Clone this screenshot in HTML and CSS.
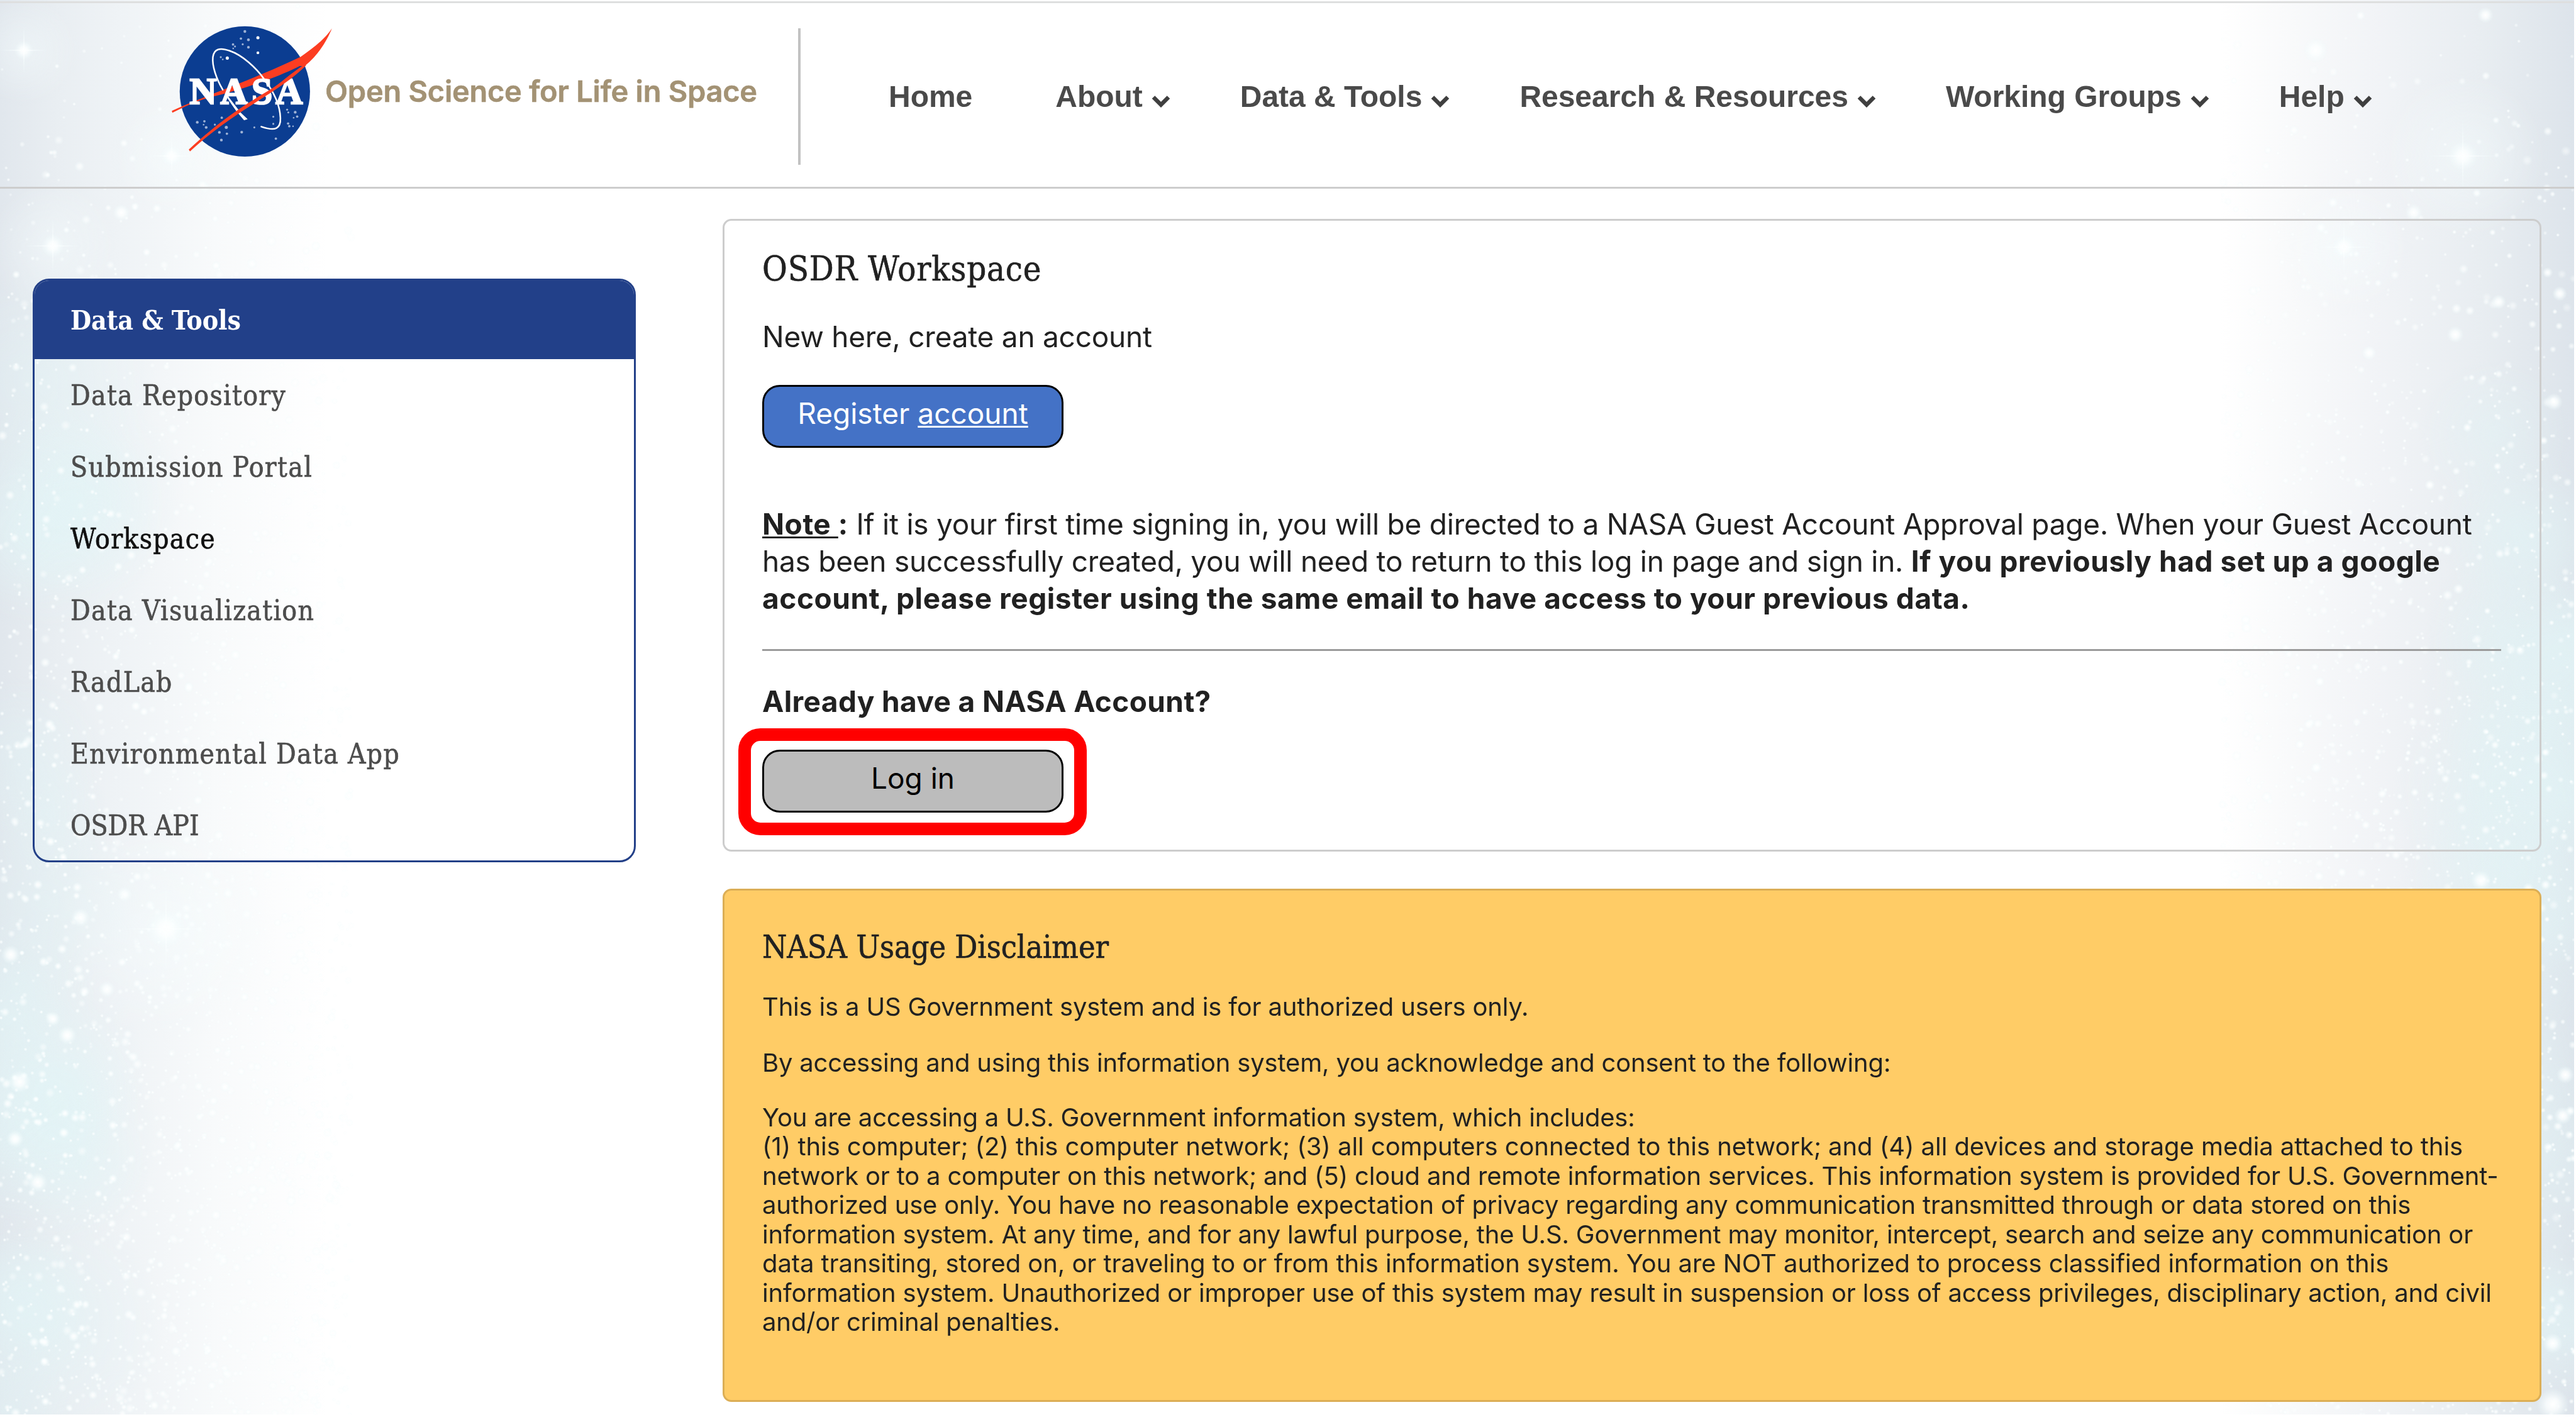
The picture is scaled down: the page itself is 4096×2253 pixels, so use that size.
FILE: index.html
```html
<!DOCTYPE html>
<html lang="en">
<head>
<meta charset="utf-8">
<title>OSDR Workspace</title>
<link rel="stylesheet" href="styles.css">
</head>
<body>
<canvas class="sky" id="sky" width="4093" height="2249"></canvas>
<header class="header">
  <a class="brand">
    <svg class="logo" viewBox="85 125 825 680">
      <circle cx="462" cy="464" r="330" fill="#0b3d91"/>
      <g fill="#9fb3d6">
        <circle cx="462" cy="160" r="7"/><circle cx="442" cy="196" r="6"/><circle cx="480" cy="202" r="7"/><circle cx="528" cy="192" r="8" fill="#fff"/><circle cx="451" cy="225" r="5"/><circle cx="480" cy="240" r="7"/><circle cx="528" cy="268" r="7" fill="#fff"/><circle cx="402" cy="226" r="6"/><circle cx="412" cy="236" r="5"/><circle cx="403" cy="246" r="4"/><circle cx="340" cy="290" r="5"/><circle cx="350" cy="302" r="4"/><circle cx="373" cy="295" r="8" fill="#fff"/>
        <circle cx="221" cy="620" r="7"/><circle cx="257" cy="615" r="6"/><circle cx="253" cy="632" r="4"/><circle cx="266" cy="646" r="7"/><circle cx="345" cy="597" r="6"/><circle cx="310" cy="632" r="5"/><circle cx="368" cy="646" r="8"/><circle cx="333" cy="671" r="7"/><circle cx="371" cy="678" r="6"/><circle cx="343" cy="710" r="7"/><circle cx="446" cy="670" r="7"/><circle cx="510" cy="646" r="5"/><circle cx="619" cy="703" r="6"/>
        <circle cx="676" cy="556" r="5"/><circle cx="682" cy="570" r="5"/><circle cx="717" cy="569" r="7"/><circle cx="727" cy="591" r="6"/><circle cx="709" cy="597" r="4"/><circle cx="681" cy="626" r="6"/><circle cx="687" cy="640" r="6"/><circle cx="706" cy="640" r="4"/><circle cx="606" cy="592" r="5"/><circle cx="606" cy="628" r="5"/>
      </g>
      <path fill="#fc3d21" d="M92 562C250 490 500 405 745 288C800 250 862 205 903 145C880 200 840 275 765 335L740 335C650 380 500 440 300 490C220 510 150 545 95 572Z"/>
      <g fill="none" stroke="#fff" stroke-linecap="round">
        <path stroke-width="8" d="M350 455C318 400 295 335 300 290C306 248 335 240 385 258C450 280 520 345 560 402C612 470 640 540 642 598C644 650 620 668 545 642"/>
        <path stroke-width="7" d="M376 490C390 520 410 545 430 568"/>
      </g>
      <path fill="#fff" d="M372 495L420 565L458 610L476 604L440 570L384 498Z"/>
      <text class="logo-text" x="182 338 496 618" y="525">NASA</text>
      <path fill="#fc3d21" d="M768 325C690 375 640 425 590 455C430 550 330 620 178 758L184 768C330 635 440 570 600 466C660 425 720 385 772 332Z"/>
    </svg>
    <span class="brand-name">Open Science for Life in Space</span>
  </a>
  <nav class="nav">
    <a class="nav-item nav-home">Home</a>
    <a class="nav-item">About <svg class="chevron" viewBox="0 0 30 20"><path d="M3 3.5L15 15.5L27 3.5"/></svg></a>
    <a class="nav-item">Data &amp; Tools <svg class="chevron" viewBox="0 0 30 20"><path d="M3 3.5L15 15.5L27 3.5"/></svg></a>
    <a class="nav-item">Research &amp; Resources <svg class="chevron" viewBox="0 0 30 20"><path d="M3 3.5L15 15.5L27 3.5"/></svg></a>
    <a class="nav-item">Working Groups <svg class="chevron" viewBox="0 0 30 20"><path d="M3 3.5L15 15.5L27 3.5"/></svg></a>
    <a class="nav-item">Help <svg class="chevron" viewBox="0 0 30 20"><path d="M3 3.5L15 15.5L27 3.5"/></svg></a>
  </nav>
</header>
<main class="main">
  <aside class="sidebar">
    <h2 class="sidebar-title">Data &amp; Tools</h2>
    <a class="side-link">Data Repository</a>
    <a class="side-link">Submission Portal</a>
    <a class="side-link active">Workspace</a>
    <a class="side-link">Data Visualization</a>
    <a class="side-link">RadLab</a>
    <a class="side-link">Environmental Data App</a>
    <a class="side-link tight">OSDR API</a>
  </aside>
  <div class="content">
    <section class="panel">
      <h1 class="title">OSDR Workspace</h1>
      <p class="intro">New here, create an account</p>
      <a class="button register">Register <u>account</u></a>
      <p class="note"><b><u>Note </u>:</b> If it is your first time signing in, you will be directed to a NASA Guest Account Approval page. When your Guest Account<br>has been successfully created, you will need to return to this log in page and sign in. <b>If you previously had set up a google<br>account, please register using the same email to have access to your previous data.</b></p>
      <div class="rule"></div>
      <p class="already">Already have a NASA Account?</p>
      <a class="button login">Log in<i class="highlight"></i></a>
    </section>
    <section class="disclaimer">
      <h2 class="title">NASA Usage Disclaimer</h2>
      <p>This is a US Government system and is for authorized users only.</p>
      <p>By accessing and using this information system, you acknowledge and consent to the following:</p>
      <p>You are accessing a U.S. Government information system, which includes:<br>
      <span class="numbered">(1) this computer; (2) this computer network; (3) all computers connected to this network; and (4) all devices and storage media attached to this</span><br>
      network or to a computer on this network; and (5) cloud and remote information services. This information system is provided for U.S. Government-<br>
      authorized use only. You have no reasonable expectation of privacy regarding any communication transmitted through or data stored on this<br>
      information system. At any time, and for any lawful purpose, the U.S. Government may monitor, intercept, search and seize any communication or<br>
      <span class="numbered">data transiting, stored on, or traveling to or from this information system. You are NOT authorized to process classified information on this</span><br>
      information system. Unauthorized or improper use of this system may result in suspension or loss of access privileges, disciplinary action, and civil<br>
      and/or criminal penalties.</p>
    </section>
  </div>
</main>
<script src="sky.js"></script>
</body>
</html>
```
FILE: styles.css
```css
* { box-sizing: border-box; margin: 0; padding: 0; }
html { background: #fff; }
body {
  position: relative; width: 4096px; height: 2253px; overflow: hidden;
  font-family: Inter, "Liberation Sans", sans-serif; color: #212121;
}

.sky {
  position: absolute; left: 0; top: 0; z-index: -1;
  background:
    linear-gradient(90deg, #e1e7ed 0, #e9eef2 90px, #eff3f6 190px, #f8fafb 340px, #fff 520px, #fff 3530px, #f9fafb 3640px, #f2f4f7 3770px, #e8edf1 3950px, #dde4eb 4093px);
}

.header {
  display: flex; align-items: flex-start;
  width: 4093px; height: 298px; margin-top: 2px;
  border-top: 3px solid #dedfdf; border-bottom: 3px solid #cdcdcd;
}
.brand {
  display: flex; align-items: flex-start;
  width: 1273px; height: 217px; margin-top: 40px; padding-left: 271px;
  border-right: 4px solid #c2c2c2;
}
.logo { width: 259px; height: 213.5px; margin-top: -6px; flex: none; }
.logo-text { font: bold 190px "Liberation Serif", serif; fill: #fff; stroke: #fff; stroke-width: 8px; }
.brand-name {
  margin: 70px 0 0 -13px; font-size: 47px; line-height: 60px; font-weight: 600;
  letter-spacing: -0.27px; color: #a39274; white-space: nowrap;
  -webkit-text-stroke: 0.6px;
}
.nav {
  display: flex; gap: 111px; margin: 119px 0 0 140px; letter-spacing: -0.02px;
  font: bold 48px/60px "Liberation Sans", Arial, sans-serif; color: #4a4a4a;
}
.nav-item { display: flex; align-items: flex-start; white-space: nowrap; }
.nav-home { padding-right: 21px; }
.chevron { width: 30px; height: 20px; margin: 27px 0 0 14px; }
.chevron path { fill: none; stroke: #3f3f3f; stroke-width: 6.5; }

.main { display: flex; align-items: flex-start; gap: 138px; padding: 48px 0 0 52px; }
.sidebar {
  width: 959px; height: 928px; margin-top: 95px;
  border: 3px solid #234088; border-radius: 26px; overflow: hidden;
  font-family: "DejaVu Serif Condensed", "DejaVu Serif", serif; font-size: 44px;
  font-stretch: condensed; letter-spacing: 1.3px;
}
.sidebar-title {
  height: 125px; padding-left: 57px; background: #224089; color: #fff;
  font-size: 42.5px; line-height: 126px; font-weight: bold; letter-spacing: -0.1px;
}
.side-link {
  display: block; height: 114px; padding: 1px 0 0 57px; line-height: 114px;
  color: #4d4d4d; -webkit-text-stroke: 0.6px;
}
.active { color: #111; }
.tight { letter-spacing: 0; }

.content { width: 2892px; }
.panel {
  height: 1006px; padding: 42px 61px 0 60px;
  border: 3px solid #cdcdcd; border-radius: 14px;
}
.title {
  font: normal 54px/70px "DejaVu Serif Condensed", "DejaVu Serif", serif;
  font-stretch: condensed; letter-spacing: 0.8px; white-space: nowrap;
  -webkit-text-stroke: 0.6px;
}
.intro { margin-top: 42px; font-size: 46px; line-height: 60px; letter-spacing: -0.25px; }
.button {
  position: relative; display: block; width: 479px; height: 100px; padding-top: 12px;
  border: 3px solid #000; border-radius: 28px; text-align: center;
  font-size: 46px; line-height: 60px;
}
u { text-underline-offset: 3px; text-decoration-thickness: 3px; text-decoration-skip-ink: none; }
.register { margin-top: 47px; background: #4472c6; color: #fff; }
.note { margin-top: 92px; font-size: 46px; line-height: 59.2px; white-space: nowrap; letter-spacing: -0.24px; }
.rule { height: 3px; margin-top: 50px; background: #9b9b9b; }
.already { margin-top: 50px; font-size: 46px; line-height: 60px; font-weight: 700; letter-spacing: 0.38px; }
b { font-weight: 700; letter-spacing: 0.56px; }
.login { margin-top: 47px; background: #bcbcbc; color: #000; }
.highlight {
  position: absolute; left: -41px; top: -37px; width: 554px; height: 170px;
  border: 20px solid #f00; border-radius: 35px;
}
.disclaimer {
  height: 816px; margin-top: 59px; padding: 55px 0 0 60px;
  background: #ffcc66; border: 3px solid #dcae55; border-radius: 14px;
}
.disclaimer .title { font-size: 50px; letter-spacing: -0.05px; }
.disclaimer p { font-size: 40px; line-height: 46.45px; white-space: nowrap; margin-top: 40px; letter-spacing: -0.19px; }
.disclaimer .title + p { margin: 37px 0 43px; }
.disclaimer .numbered { letter-spacing: -0.07px; }
```
FILE: sky.js
```js
const c = document.getElementById('sky').getContext('2d');
let seed = 7;
const rnd = () => (seed = (seed * 16807) % 2147483647) / 2147483647;
function glow(x, y, r, a) {
  const g = c.createRadialGradient(x, y, 0, x, y, r);
  g.addColorStop(0, 'rgba(255,255,255,' + a + ')');
  g.addColorStop(0.4, 'rgba(252,255,255,' + a * 0.75 + ')');
  g.addColorStop(1, 'rgba(240,252,253,0)');
  c.fillStyle = g;
  c.fillRect(x - r, y - r, 2 * r, 2 * r);
}
function haze(x, y, r, col) {
  const g = c.createRadialGradient(x, y, 0, x, y, r);
  g.addColorStop(0, 'rgba(' + col + ',0.45)');
  g.addColorStop(1, 'rgba(' + col + ',0)');
  c.fillStyle = g;
  c.fillRect(x - r, y - r, 2 * r, 2 * r);
}
// bright star with a soft halo and a cross of light
function flare(x, y, s) {
  haze(x, y, s * 2.2, '246,253,254');
  glow(x, y, s * 0.38, 1);
  for (const [w, h] of [[s * 2, 3], [3, s * 2]]) {
    c.save(); c.translate(x, y); c.scale(w / 2, h / 2);
    glow(0, 0, 1, 0.7); c.restore();
  }
}
for (let i = 0; i < 40; i++) {
  const left = i % 2;
  haze(left ? rnd() * 140 : 4093 - rnd() * 140, 600 + rnd() * 1650, 80 + rnd() * 110, '226,244,246');
}
for (let i = 0; i < 5400; i++) {
  const y = 2249 * Math.pow(rnd(), 0.55);
  const d = rnd() * 560;
  const x = rnd() < 0.5 ? d : 4093 - d;
  const r = 3 + 6 * Math.pow(rnd(), 3);
  glow(x, y, r, 0.4 + 0.6 * rnd());
}
[[31,1720,18],[17,1518,15],[128,1459,15],[107,1646,15],[24,1811,14],[60,1880,16],[170,1573,13],[84,1620,12],[198,1422,12],
 [193,338,14],[3952,24,13],[3838,338,14],[3904,532,14],[3767,561,12],[4061,639,14],[3973,480,12],[4070,467,12],
 [4059,2233,26],[4059,2136,16],[3945,1400,16],[4079,1709,14],[4075,1774,14],[3682,80,20]].forEach(s => glow(s[0], s[1], s[2], 1));
[[38,80,40],[273,248,44],[84,391,48],[264,1477,80],[3916,248,62],[3727,393,50]].forEach(s => flare(...s));
```
